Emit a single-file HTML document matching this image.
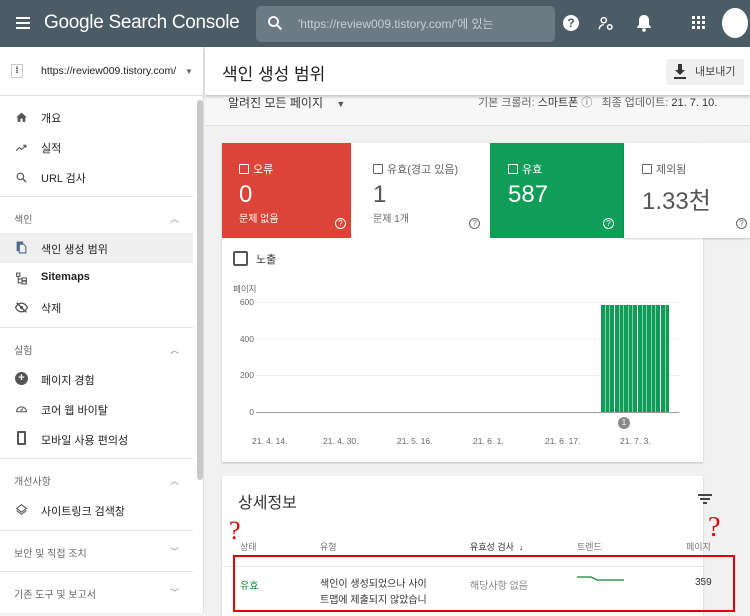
<!DOCTYPE html>
<html><head><meta charset="utf-8"><style>
*{margin:0;padding:0;box-sizing:border-box}
body{width:750px;height:613px;overflow:hidden;font-family:"Liberation Sans","Noto Sans CJK KR",sans-serif;background:#f1f1f1;position:relative;color:#202124}
.a{position:absolute}
.hdr{left:0;top:0;width:750px;height:47px;background:#4b5c66}
.side{left:0;top:47px;width:204px;height:566px;background:#fff;border-right:1px solid #ddd}
.it{position:absolute;left:41px;font-size:11px;color:#202124}
.sec{position:absolute;left:14px;font-size:10px;color:#666}
.div{position:absolute;left:0;width:193px;height:1px;background:#e2e2e2}
.ic{position:absolute;left:15px;width:13px;height:13px}
.chev{position:absolute;left:170px;font-size:9px;color:#888}
.card{background:#fff;box-shadow:0 1px 2px rgba(0,0,0,.2)}
.ylab{position:absolute;font-size:8.5px;color:#666;text-align:right;width:22px}
.grid{position:absolute;left:256px;width:423px;height:1px;background:#eee}
.dl{position:absolute;top:436px;font-size:8.5px;color:#666}
.cb{display:inline-block;width:10px;height:10px;border:1px solid currentColor;vertical-align:-1px;margin-right:4px;border-radius:1px}
.q{position:absolute;width:11px;height:11px;border:1px solid currentColor;border-radius:50%;font-size:8px;line-height:9px;text-align:center}
</style></head><body>
<div class="a hdr"></div>
<div class="a" style="left:16px;top:17px;width:14px;height:2px;background:#fff;box-shadow:0 5px 0 #fff,0 10px 0 #fff"></div>
<div class="a" style="left:44px;top:12px;color:#fff;font-size:19px;letter-spacing:-0.3px">Google Search Console</div>
<div class="a" style="left:256px;top:6px;width:299px;height:36px;background:#6b7a83;border-radius:5px"></div>
<svg class="a" style="left:266px;top:14px" width="18" height="18" viewBox="0 0 24 24"><circle cx="10" cy="10" r="6" fill="none" stroke="#fff" stroke-width="2.4"/><path d="M14.5 14.5l6 6" stroke="#fff" stroke-width="2.6"/></svg>
<div class="a" style="left:298px;top:15px;color:#c8d0d4;font-size:12px">'https://review009.tistory.com/'에 있는</div>
<div class="a" style="left:563px;top:15px;width:16px;height:16px;border-radius:50%;background:#fff;color:#4b5c66;font-size:12px;font-weight:bold;text-align:center;line-height:16px">?</div>
<svg class="a" style="left:597px;top:15px" width="18" height="18" viewBox="0 0 24 24" fill="none" stroke="#fff" stroke-width="2"><circle cx="9" cy="7" r="3.5"/><path d="M3 19c0-4 3-6 6-6"/><circle cx="17" cy="16" r="3"/></svg>
<svg class="a" style="left:636px;top:14px" width="16" height="18" viewBox="0 0 16 18"><path d="M8 1c-3 0-5 2-5 5v5l-2 2v1h14v-1l-2-2V6c0-3-2-5-5-5z" fill="#fff"/><circle cx="8" cy="16" r="1.8" fill="#fff"/></svg>
<svg class="a" style="left:692px;top:16px" width="14" height="14"><g fill="#fff"><rect x="0" y="0" width="3" height="3"/><rect x="5" y="0" width="3" height="3"/><rect x="10" y="0" width="3" height="3"/><rect x="0" y="5" width="3" height="3"/><rect x="5" y="5" width="3" height="3"/><rect x="10" y="5" width="3" height="3"/><rect x="0" y="10" width="3" height="3"/><rect x="5" y="10" width="3" height="3"/><rect x="10" y="10" width="3" height="3"/></g></svg>
<div class="a" style="left:722px;top:8px;width:26px;height:30px;border-radius:50%;background:#fff"></div>

<div class="a side"></div>
<div class="a" style="left:0;top:95px;width:204px;height:1px;background:#e0e0e0"></div>
<div class="a" style="left:11px;top:64px;width:12px;height:14px;border:1px solid #ccc;background:#fff;font-size:9px;text-align:center;line-height:11px;font-weight:bold">⁞</div>
<div class="a" style="left:41px;top:65px;font-size:10.5px">https://review009.tistory.com/</div>
<div class="a" style="left:185px;top:67px;font-size:8px;color:#666">▼</div>
<div class="a" style="left:197px;top:100px;width:6px;height:380px;background:#c8c8c8;border-radius:3px"></div>

<svg class="ic" style="top:111px" viewBox="0 0 24 24"><path d="M10 20v-6h4v6h5v-8h3L12 3 2 12h3v8z" fill="#555"/></svg>
<div class="it" style="top:110px">개요</div>
<svg class="ic" style="top:141px" viewBox="0 0 24 24"><path d="M2 18l6-6 4 4 8-8M15 8h5v5" fill="none" stroke="#555" stroke-width="2"/></svg>
<div class="it" style="top:140px">실적</div>
<svg class="ic" style="top:171px" viewBox="0 0 24 24"><circle cx="10" cy="10" r="6" fill="none" stroke="#555" stroke-width="2.2"/><path d="M14.5 14.5l6 6" stroke="#555" stroke-width="2.4"/></svg>
<div class="it" style="top:170px">URL 검사</div>
<div class="div" style="top:196px"></div>
<div class="sec" style="top:211px">색인</div><div class="chev" style="top:212px">︿</div>
<div class="a" style="left:0;top:233px;width:193px;height:30px;background:#efefef"></div>
<svg class="ic" style="top:241px" viewBox="0 0 24 24"><path d="M4 2h10v2H6v14H4z M8 6h8l4 4v12H8z" fill="none" stroke="#4a6a8a" stroke-width="2"/></svg>
<div class="it" style="top:241px">색인 생성 범위</div>
<svg class="ic" style="top:272px" viewBox="0 0 24 24" fill="none" stroke="#555" stroke-width="2"><rect x="3" y="2" width="6" height="6"/><rect x="13" y="11" width="8" height="5"/><rect x="13" y="17" width="8" height="5"/><path d="M6 8v12h7M6 13h7"/></svg>
<div class="it" style="top:271px;font-weight:bold">Sitemaps</div>
<svg class="ic" style="top:301px" viewBox="0 0 24 24"><path d="M1 12c3-6 8-8 11-8s8 2 11 8c-3 6-8 8-11 8S4 18 1 12z" fill="none" stroke="#555" stroke-width="2.5"/><circle cx="12" cy="12" r="3" fill="#555"/><path d="M3 3l18 18" stroke="#555" stroke-width="2.5"/></svg>
<div class="it" style="top:300px">삭제</div>
<div class="div" style="top:327px"></div>
<div class="sec" style="top:342px">실험</div><div class="chev" style="top:343px">︿</div>
<div class="ic" style="top:372px;border-radius:50%;background:#555;color:#fff;font-size:11px;line-height:12px;text-align:center;font-weight:bold">+</div>
<div class="it" style="top:372px">페이지 경험</div>
<svg class="ic" style="top:402px" viewBox="0 0 24 24"><path d="M3 18a9 9 0 1 1 18 0z" fill="none" stroke="#555" stroke-width="2"/><path d="M10 17l5-5" stroke="#555" stroke-width="2"/></svg>
<div class="it" style="top:402px">코어 웹 바이탈</div>
<div class="ic" style="top:431px;left:17px;width:9px;height:14px;border:2px solid #555;border-radius:1px"></div>
<div class="it" style="top:432px">모바일 사용 편의성</div>
<div class="div" style="top:458px"></div>
<div class="sec" style="top:473px">개선사항</div><div class="chev" style="top:474px">︿</div>
<svg class="ic" style="top:503px" viewBox="0 0 24 24" fill="none" stroke="#555" stroke-width="2"><path d="M12 3l9 7-9 7-9-7z"/><path d="M3 14l9 7 9-7"/></svg>
<div class="it" style="top:503px">사이트링크 검색창</div>
<div class="div" style="top:530px"></div>
<div class="sec" style="top:545px">보안 및 직접 조치</div><div class="chev" style="top:545px">﹀</div>
<div class="div" style="top:571px"></div>
<div class="sec" style="top:586px">기존 도구 및 보고서</div><div class="chev" style="top:586px">﹀</div>

<!-- content -->
<div class="a" style="left:205px;top:96px;width:545px;height:30px;background:#f7f7f7;border-bottom:1px solid #e0e0e0"></div>
<div class="a" style="left:228px;top:94px;font-size:12px;color:#333">알려진 모든 페이지 &nbsp;&nbsp;&nbsp;<span style="font-size:9px;color:#555">▼</span></div>
<div class="a" style="left:478px;top:94px;font-size:11px;color:#666">기본 크롤러: <span style="color:#333">스마트폰</span> ⓘ &nbsp;&nbsp;최종 업데이트: <span style="color:#333">21. 7. 10.</span></div>
<div class="a" style="left:205px;top:47px;width:545px;height:48px;background:#fff;box-shadow:0 2px 3px rgba(0,0,0,.2)"></div>
<div class="a" style="left:222px;top:60px;font-size:17px">색인 생성 범위</div>
<div class="a" style="left:666px;top:59px;width:78px;height:26px;background:#efefef;border-radius:2px"></div>
<svg class="a" style="left:673px;top:64px" width="14" height="16" viewBox="0 0 14 16"><path d="M5 0h4v6h3L7 11 2 6h3z" fill="#333"/><rect x="1" y="13" width="12" height="2" fill="#333"/></svg>
<div class="a" style="left:695px;top:63px;font-size:11px;color:#444">내보내기</div>

<div class="a card" style="left:222px;top:143px;width:481px;height:319px"></div>
<div class="a" style="left:222px;top:143px;width:129px;height:95px;background:#db4437;color:#fff">
 <div class="a" style="left:17px;top:18px;font-size:11px"><span class="cb"></span>오류</div>
 <div class="a" style="left:17px;top:38px;font-size:24px">0</div>
 <div class="a" style="left:17px;top:67px;font-size:10px">문제 없음</div>
 <div class="q" style="left:113px;top:75px">?</div>
</div>
<div class="a" style="left:351px;top:143px;width:139px;height:95px;background:#fff;color:#666">
 <div class="a" style="left:22px;top:18px;font-size:11px"><span class="cb"></span>유효(경고 있음)</div>
 <div class="a" style="left:22px;top:38px;font-size:24px;color:#555">1</div>
 <div class="a" style="left:22px;top:67px;font-size:10px">문제 1개</div>
 <div class="q" style="left:118px;top:75px">?</div>
</div>
<div class="a" style="left:490px;top:143px;width:134px;height:95px;background:#0f9d58;color:#fff">
 <div class="a" style="left:18px;top:18px;font-size:11px"><span class="cb"></span>유효</div>
 <div class="a" style="left:18px;top:38px;font-size:24px">587</div>
 <div class="q" style="left:113px;top:75px">?</div>
</div>
<div class="a" style="left:624px;top:143px;width:126px;height:95px;background:#fff;color:#666;box-shadow:0 1px 2px rgba(0,0,0,.2)">
 <div class="a" style="left:18px;top:18px;font-size:11px"><span class="cb"></span>제외됨</div>
 <div class="a" style="left:18px;top:38px;font-size:24px;color:#555">1.33천</div>
 <div class="q" style="left:112px;top:75px">?</div>
</div>
<div class="a" style="left:233px;top:251px;width:15px;height:15px;border:2px solid #555;border-radius:2px"></div>
<div class="a" style="left:256px;top:251px;font-size:11px;color:#333">노출</div>
<div class="a" style="left:233px;top:283px;font-size:8.5px;color:#666">페이지</div>
<div class="ylab" style="left:232px;top:297px">600</div>
<div class="ylab" style="left:232px;top:334px">400</div>
<div class="ylab" style="left:232px;top:370px">200</div>
<div class="ylab" style="left:232px;top:407px">0</div>
<div class="grid" style="top:302px"></div>
<div class="grid" style="top:339px"></div>
<div class="grid" style="top:375px"></div>
<div class="grid" style="top:412px;background:#999"></div>
<div class="a" style="left:601px;top:305px;width:68px;height:107px;background:repeating-linear-gradient(90deg,#0f9d58 0 4px,#fff 4px 4.6px)"></div>
<div class="a" style="left:618px;top:417px;width:12px;height:12px;border-radius:50%;background:#888;color:#fff;font-size:8px;text-align:center;line-height:12px">1</div>
<div class="dl" style="left:252px">21. 4. 14.</div>
<div class="dl" style="left:323px">21. 4. 30.</div>
<div class="dl" style="left:397px">21. 5. 16.</div>
<div class="dl" style="left:473px">21. 6. 1.</div>
<div class="dl" style="left:545px">21. 6. 17.</div>
<div class="dl" style="left:620px">21. 7. 3.</div>

<div class="a card" style="left:222px;top:476px;width:481px;height:140px"></div>
<div class="a" style="left:238px;top:489px;font-size:16px;color:#333">상세정보</div>
<div class="a" style="left:698px;top:494px;width:14px;height:2px;background:#444"></div>
<div class="a" style="left:700px;top:498px;width:10px;height:2px;background:#444"></div>
<div class="a" style="left:703px;top:502px;width:4px;height:2px;background:#444"></div>
<div class="a" style="left:240px;top:540px;font-size:9px;color:#777">상태</div>
<div class="a" style="left:320px;top:540px;font-size:9px;color:#777">유형</div>
<div class="a" style="left:470px;top:540px;font-size:9px;color:#333">유효성 검사 &nbsp;↓</div>
<div class="a" style="left:577px;top:540px;font-size:9px;color:#777">트렌드</div>
<div class="a" style="left:686px;top:540px;font-size:9px;color:#777">페이지</div>
<div class="a" style="left:222px;top:566px;width:481px;height:1px;background:#e6e6e6"></div>
<div class="a" style="left:240px;top:577px;font-size:10px;color:#188038">유효</div>
<div class="a" style="left:320px;top:577px;font-size:10px;line-height:16px;color:#333">색인이 생성되었으나 사이<br>트맵에 제출되지 않았습니</div>
<div class="a" style="left:470px;top:577px;font-size:10px;color:#888">해당사항 없음</div>
<svg class="a" style="left:577px;top:575px" width="48" height="8"><path d="M0 2h14l6 3h27" stroke="#188038" stroke-width="1.3" fill="none"/></svg>
<div class="a" style="left:695px;top:577px;font-size:10px;color:#333">359</div>
<div class="a" style="left:233px;top:555px;width:502px;height:57px;border:2px solid #e00000"></div>
<div class="a" style="left:229px;top:516px;font-size:26px;color:#e00000;font-family:'Liberation Serif',serif">?</div>
<div class="a" style="left:708px;top:512px;font-size:28px;color:#e00000;font-family:'Liberation Serif',serif">?</div>
</body></html>
